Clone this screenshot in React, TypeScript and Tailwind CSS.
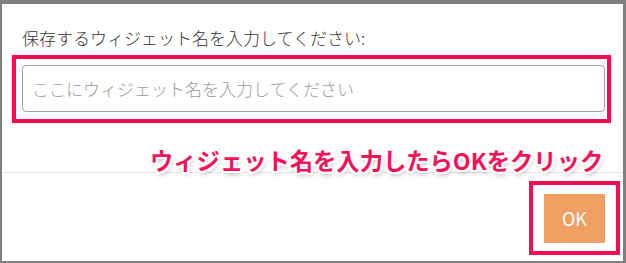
import { useState } from "react";

const JP = "font-['Noto_Sans_CJK_JP','Noto_Sans',sans-serif]";

export default function App() {
  const [name, setName] = useState("");

  return (
    <div
      className={`relative box-border h-[263px] w-[626px] border-t-4 border-r-[3px] border-b-2 border-l-2 border-[#7f7f7f] bg-white ${JP}`}
    >
      {/* body */}
      <div className="pt-[22px] pb-[49px]">
        <label className="block pl-[20px] text-[17px] leading-[24px] font-light text-[#333333]">
          保存するウィジェット名を入力してください:
        </label>
        <div className="mt-[5px] ml-[10px] box-border h-[68px] w-[599px] border-4 border-[#ff0a55] pt-[6px] pl-[6px]">
          <input
            value={name}
            onChange={(e) => setName(e.target.value)}
            placeholder="ここにウィジェット名を入力してください"
            className="box-border h-[47px] w-[583px] rounded-[4px] border border-[#a3a3a3] px-[9px] text-[17px] font-light text-[#333333] outline-none placeholder:text-[#9a9a9a]"
          />
        </div>
      </div>

      {/* footer */}
      <div className="flex justify-end border-t border-[#e5e5e5] pt-[8px] pr-[3px]">
        <div className="box-border flex h-[74px] w-[91px] items-center justify-center border-4 border-[#ff0a55]">
          <button
            type="button"
            className="h-[49px] w-[61px] bg-[#f0a062] text-[18px] text-white"
          >
            OK
          </button>
        </div>
      </div>

      {/* annotation */}
      <div className="absolute top-[141px] left-[148px] text-[23.3px] leading-[30px] font-bold whitespace-nowrap text-[#f2135a] [text-shadow:-2px_-2px_0_#fff,2px_-2px_0_#fff,-2px_2px_0_#fff,2px_2px_0_#fff,0_-2px_0_#fff,0_2px_0_#fff,-2px_0_0_#fff,2px_0_0_#fff,1px_3px_5px_rgba(0,0,0,0.35)]">
        ウィジェット名を入力したらOKをクリック
      </div>
    </div>
  );
}
